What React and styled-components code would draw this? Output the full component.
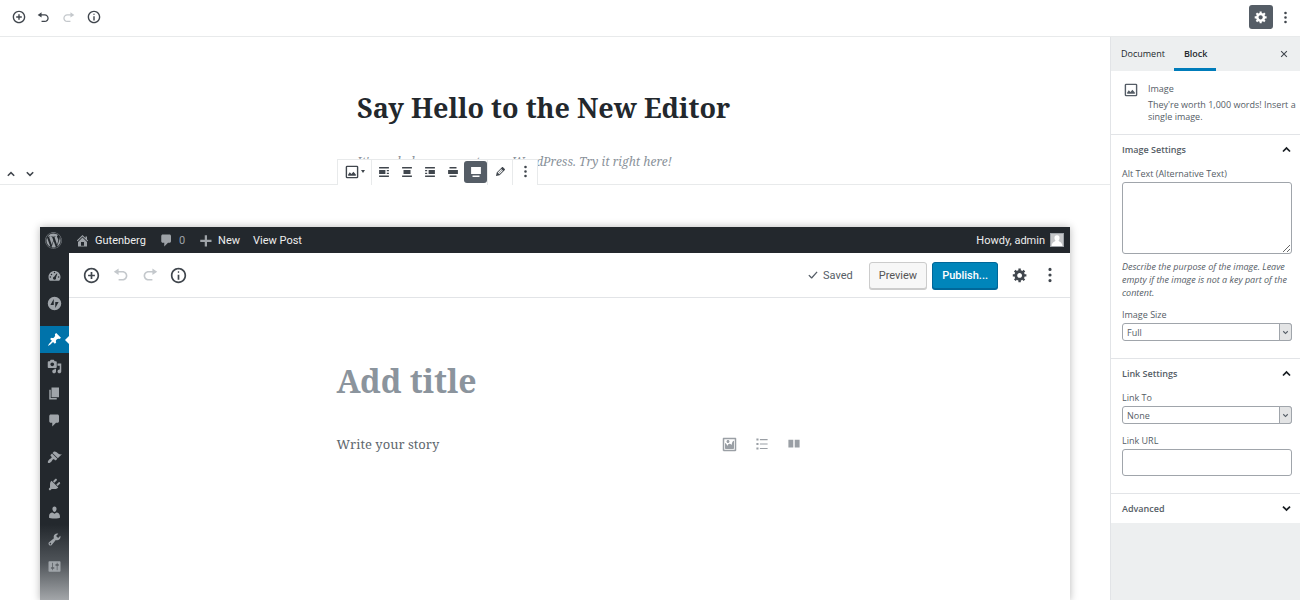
import React, { useState } from "react";
import styled, { createGlobalStyle, css } from "styled-components";
import { FaWordpress } from "react-icons/fa";

const GlobalStyle = createGlobalStyle`
  * {
    box-sizing: border-box;
  }
  body {
    margin: 0;
    background: #fff;
    color: #555d66;
    font-family: "Open Sans", "Noto Sans", sans-serif;
    font-size: 9px;
  }
  button, input, select, textarea {
    font: inherit;
    color: inherit;
    margin: 0;
  }
`;

const serif = `"Noto Serif", "DejaVu Serif Condensed", "DejaVu Serif", serif`;

const paths = {
  insert:
    "M10 1c-5 0-9 4-9 9s4 9 9 9 9-4 9-9-4-9-9-9zm0 16c-3.9 0-7-3.1-7-7s3.1-7 7-7 7 3.1 7 7-3.1 7-7 7zm1-11H9v3H6v2h3v3h2v-3h3V9h-3V6z",
  undo: "M12 5H7V2L1 6l6 4V7h5c2.2 0 4 1.8 4 4s-1.8 4-4 4H7v2h5c3.3 0 6-2.7 6-6s-2.7-6-6-6z",
  redo: "M8 5h5V2l6 4-6 4V7H8c-2.2 0-4 1.8-4 4s1.8 4 4 4h5v2H8c-3.3 0-6-2.7-6-6s2.7-6 6-6z",
  info: "M9 15h2V9H9v6zm1-10c-.5 0-1 .5-1 1s.5 1 1 1 1-.5 1-1-.5-1-1-1zm0-4c-5 0-9 4-9 9s4 9 9 9 9-4 9-9-4-9-9-9zm0 16c-3.9 0-7-3.1-7-7s3.1-7 7-7 7 3.1 7 7-3.1 7-7 7z",
  gear: "M18 12h-2.18c-.17.7-.44 1.35-.81 1.93l1.54 1.54-2.1 2.1-1.54-1.54c-.58.36-1.23.63-1.91.79V19H8v-2.18c-.68-.16-1.33-.43-1.91-.79l-1.54 1.54-2.12-2.12 1.54-1.54c-.36-.58-.63-1.23-.79-1.91H1V9.03h2.17c.16-.7.44-1.35.8-1.94L2.43 5.55l2.1-2.1 1.54 1.54c.58-.37 1.24-.64 1.93-.81V2h3v2.18c.68.16 1.33.43 1.91.79l1.54-1.54 2.12 2.12-1.54 1.54c.36.59.64 1.24.8 1.94H18V12zm-8.5 1.5c1.66 0 3-1.34 3-3s-1.34-3-3-3-3 1.34-3 3 1.34 3 3 3z",
  more: "M10 1a2 2 0 1 0 0 4 2 2 0 0 0 0-4zm0 7a2 2 0 1 0 0 4 2 2 0 0 0 0-4zm0 7a2 2 0 1 0 0 4 2 2 0 0 0 0-4z",
  close: "M5 3.5L10 8.5l5-5L16.500 5l-5 5 5 5-1.500 1.500-5-5-5 5L3.500 15l5-5-5-5z",
  up: "M10 5l7.500 7.500-2.200 2.200L10 9.400l-5.300 5.300-2.200-2.200z",
  down: "M10 15L2.500 7.500l2.200-2.200L10 10.600l5.300-5.300 2.200 2.200z",
  home: "M16 8.500l1.530 1.530-1.060 1.060L10 4.600l-6.470 6.490-1.060-1.060L10 2.500l4 4v-2h2v4zm-6-2.460l6 5.990V18H4v-5.970zM12 17v-5H8v5h4z",
  comment:
    "M5 2h9c1.100 0 2 .9 2 2v7c0 1.100-.9 2-2 2h-2l-5 5v-5H5c-1.100 0-2-.9-2-2V4c0-1.100.9-2 2-2z",
  plus: "M18 9v3h-6v6H9v-6H3V9h6V3h3v6h6z",
  dashboard:
    "M3.760 17h12.480c1.100-1.370 1.760-3.110 1.760-5 0-4.420-3.580-8-8-8s-8 3.580-8 8c0 1.890.66 3.630 1.760 5zM9 6a1 1 0 1 1 2 0 1 1 0 0 1-2 0zM5 8.500a1 1 0 1 1 2 0 1 1 0 0 1-2 0zM3.500 12a1 1 0 1 1 2 0 1 1 0 0 1-2 0zm11 0a1 1 0 1 1 2 0 1 1 0 0 1-2 0zM12.900 7.200l.9.5-1.900 5.200c.5 1.400-.4 2.700-1.900 2.700s-2.500-1.500-1.800-2.800c.3-.6.8-.9 1.400-1z",
  jetpack:
    "M10 1a9 9 0 1 0 0 18 9 9 0 0 0 0-18zM9 4v8H4.500zM11 16V8h4.500z",
  pin: "M10.440 3.020l1.820-1.820 6.360 6.350-1.830 1.820c-1.050-.68-2.480-.57-3.410.36l-.75.75c-.92.93-1.040 2.350-.35 3.410l-1.830 1.820-2.410-2.410-2.800 2.790c-.42.42-3.380 2.710-3.800 2.290s1.860-3.390 2.280-3.810l2.790-2.790L4.100 9.360l1.830-1.820c1.050.69 2.480.57 3.400-.36l.75-.75c.93-.92 1.050-2.350.36-3.410z",
  media:
    "M13 11V4c0-.55-.45-1-1-1h-1.670L9 1H5L3.670 3H2c-.55 0-1 .45-1 1v7c0 .55.45 1 1 1h10c.55 0 1-.45 1-1zM7 4.500c1.380 0 2.500 1.120 2.500 2.500S8.380 9.500 7 9.500 4.500 8.380 4.500 7 5.620 4.500 7 4.500zM14 6h5v10.500c0 1.380-1.120 2.500-2.500 2.500S14 17.880 14 16.500s1.120-2.500 2.500-2.500c.17 0 .34.02.5.05V9h-3V6zm-4 8.050V13h2v3.500c0 1.380-1.120 2.500-2.500 2.500S7 17.880 7 16.500 8.120 14 9.500 14c.17 0 .34.02.5.05z",
  page: "M6 15V2h10v13H6zm-1 1h8v2H3V5h2v11z",
  brush:
    "M14.480 11.060L7.410 3.990l1.500-1.500c.5-.56 2.300-.47 3.510.32 1.210.8 1.430 1.280 2.910 2.100 1.180.64 2.450 1.260 4.450.85zm-.71.71L6.700 4.700 4.930 6.470c-.39.39-.39 1.020 0 1.410l1.060 1.060c.39.39.39 1.030 0 1.420-.6.6-1.430 1.110-2.210 1.690-.35.26-.7.53-1.010.84C1.430 14.230.4 16.080 1.400 17.070c.99 1 2.840-.03 4.180-1.360.31-.31.58-.66.85-1.020.57-.78 1.080-1.610 1.690-2.210.39-.39 1.020-.39 1.410 0l1.060 1.060c.39.39 1.020.39 1.410 0z",
  plug: "M13.110 4.360L9.870 7.600 8 5.730l3.240-3.240c.35-.34 1.050-.2 1.560.32.52.51.66 1.210.31 1.550zm-8 1.770l.91-1.120 9.010 9.010-1.190.84c-.71.71-2.630 1.160-3.820 1.160H6.140L4.900 17.260c-.59.59-1.540.59-2.120 0-.59-.58-.59-1.530 0-2.120l1.240-1.240v-3.880c0-1.130.4-3.190 1.090-3.890zm7.260 3.970l3.240-3.240c.34-.35 1.040-.21 1.550.31.52.51.66 1.210.31 1.550l-3.240 3.250z",
  user: "M10 9.250c-2.270 0-2.730-3.440-2.730-3.440C7 4.020 7.820 2 9.970 2c2.160 0 2.980 2.020 2.710 3.810 0 0-.41 3.440-2.680 3.440zm0 2.570L12.720 10c2.390 0 4.520 2.330 4.520 4.530v2.490s-3.650 1.130-7.240 1.130c-3.650 0-7.240-1.130-7.240-1.130v-2.490c0-2.250 1.940-4.480 4.470-4.480z",
  wrench:
    "M16.680 9.770c-1.340 1.340-3.300 1.670-4.950.99l-5.410 6.520c-.99.99-2.590.99-3.580 0s-.99-2.590 0-3.570l6.520-5.420c-.68-1.650-.35-3.610.99-4.950 1.280-1.280 3.120-1.620 4.720-1.060l-2.890 2.890 2.820 2.820 2.860-2.870c.53 1.580.18 3.390-1.080 4.650zM3.810 16.210c.4.39 1.040.39 1.430 0 .4-.4.4-1.040 0-1.430-.39-.4-1.030-.4-1.430 0-.39.39-.39 1.030 0 1.430z",
  sliders:
    "M18 16V4c0-.55-.45-1-1-1H3c-.55 0-1 .45-1 1v12c0 .55.45 1 1 1h14c.55 0 1-.45 1-1zM8 11h1c.55 0 1 .45 1 1s-.45 1-1 1H8v1.500c0 .28-.22.5-.5.5s-.5-.22-.5-.5V13H6c-.55 0-1-.45-1-1s.45-1 1-1h1V5.500c0-.28.22-.5.5-.5s.5.22.5.5V11zm5-2h-1c-.55 0-1-.45-1-1s.45-1 1-1h1V5.500c0-.28.22-.5.5-.5s.5.22.5.5V7h1c.55 0 1 .45 1 1s-.45 1-1 1h-1v5.500c0 .28-.22.5-.5.5s-.5-.22-.5-.5V9z",
  check: "M16 4l1.600 1.300L8.500 16H7L2.300 11l1.600-1.500 3.800 3.700z",
  edit: "M13.890 3.390l2.710 2.720c.46.46.42 1.240.03 1.640l-8.010 8.020-5.560 1.160 1.160-5.580s7.600-7.630 7.990-8.030c.39-.39 1.220-.39 1.680.07zm-2.730 2.790l-5.590 5.610 1.110 1.110 5.540-5.650zm-2.970 8.230l5.580-5.600-1.070-1.080-5.590 5.600z",
  alignLeft: "M3 5h14V3H3v2zm9 8V7H3v6h9zm2-4h3V7h-3v2zm0 4h3v-2h-3v2zM3 17h14v-2H3v2z",
  alignCenter: "M3 5h14V3H3v2zm12 8V7H5v6h10zM3 17h14v-2H3v2z",
  alignRight: "M3 5h14V3H3v2zm0 4h3V7H3v2zm14 4V7H8v6h9zM3 13h3v-2H3v2zm0 4h14v-2H3v2z",
  alignWide: "M5 5h10V3H5v2zm12 8V7H3v6h14zM5 17h10v-2H5v2z",
  alignFull: "M17 13V3H3v10h14zM5 17h10v-2H5v2z",
  picture:
    "M3 1h14a2 2 0 0 1 2 2v14a2 2 0 0 1-2 2H3a2 2 0 0 1-2-2V3a2 2 0 0 1 2-2zm0 2v14h14V3zM4.500 15.500v-2l2.300-3 2.400 2.500 2.800-3.500 3.500 4v2z",
  formatImage:
    "M2.250 1h15.500c.69 0 1.250.56 1.250 1.250v15.500c0 .69-.56 1.250-1.250 1.250H2.250C1.560 19 1 18.440 1 17.750V2.250C1 1.560 1.560 1 2.250 1zM17 17V3H3v14h14zM10 6c0-1.100-.9-2-2-2s-2 .9-2 2 .9 2 2 2 2-.9 2-2zm3 5s0-6 3-6v10c0 .55-.45 1-1 1H5c-.55 0-1-.45-1-1V8c2 0 3 4 3 4s1-3 3-3 3 2 3 2z",
  list: "M2 2h3v3H2zM7 3h11v1.500H7zM2 8.500h3v3H2zM7 9.300h11v1.500H7zM2 15h3v3H2zM7 15.800h11v1.500H7z",
  columns: "M2 4h7v11H2zM11 4h7v11h-7z",
  avatar: "M10 2c3 0 4.500 2.200 4.200 5-.2 2-1 3.300-1.700 4 .2 2 6 2 6.500 9H1c.5-7 6.300-7 6.500-9-.7-.7-1.500-2-1.700-4C5.500 4.200 7 2 10 2z",
};

function Icon({ name, size = 15 }) {
  return (
    <svg width={size} height={size} viewBox="0 0 20 20" fill="currentColor" fillRule="evenodd" aria-hidden="true">
      <path d={paths[name]} />
    </svg>
  );
}

const Page = styled.div`
  display: flex;
  flex-direction: column;
  height: 100vh;
  overflow: hidden;
`;

const TopBar = styled.header`
  display: flex;
  align-items: center;
  justify-content: space-between;
  flex: none;
  height: 37px;
  padding: 0 6px 2px;
  border-bottom: 1px solid #e8eaeb;
`;

const Tools = styled.div`
  display: flex;
  align-items: center;
  gap: ${(props) => props.$gap || 0}px;
`;

const IconButton = styled.button`
  display: flex;
  align-items: center;
  justify-content: center;
  width: ${(props) => props.$width || 25}px;
  height: ${(props) => props.$height || 24}px;
  padding: 0;
  border: 0;
  border-radius: 3px;
  background: ${(props) => (props.$active ? "#555d66" : "transparent")};
  color: ${(props) => (props.$active ? "#fff" : "#40464d")};
  &:disabled {
    color: #c4c8cc;
  }
`;

const Body = styled.div`
  display: flex;
  flex: 1;
  min-height: 0;
`;

const Canvas = styled.main`
  flex: 1;
  min-width: 0;
  overflow: hidden;
`;

const Post = styled.div`
  width: 396px;
  margin: 0 auto;
  padding-top: 49px;
`;

const PostTitle = styled.h1`
  margin: 0;
  color: #23282d;
  font-family: ${serif};
  font-size: 27px;
  line-height: 44px;
  white-space: nowrap;
`;

const Tagline = styled.p`
  margin: 20px 0 0;
  color: #8a929a;
  font-family: ${serif};
  font-size: 12px;
  font-style: italic;
  line-height: 24px;
  white-space: nowrap;
`;

const ImageBlock = styled.section`
  position: relative;
  margin-top: 10px;
  padding: 42px 40px 0;
  border-top: 1px solid #e8eaeb;
`;

const Movers = styled.div`
  position: absolute;
  left: 1px;
  bottom: 100%;
  display: flex;
`;

const BlockToolbar = styled.div`
  position: absolute;
  left: 337px;
  bottom: 100%;
  display: flex;
  border: 1px solid #e8eaeb;
  border-bottom: 0;
  background: #fff;
`;

const ToolbarGroup = styled.div`
  display: flex;
  align-items: center;
  height: 25px;
  padding-bottom: 2px;
  & + & {
    border-left: 1px solid #e8eaeb;
  }
`;

const Caret = styled.span`
  margin-left: 2px;
  border: 2px solid transparent;
  border-top: 3px solid currentColor;
  border-bottom: 0;
`;

const Shot = styled.div`
  height: 374px;
  background: #fff;
  box-shadow: 0 0 8px rgba(0, 0, 0, 0.28);
  font-family: Roboto, Inter, sans-serif;
  font-size: 11px;
`;

const AdminBar = styled.div`
  display: flex;
  align-items: center;
  justify-content: space-between;
  height: 26px;
  padding: 0 6px 0 5px;
  background: #23282d;
  color: #eee;
`;

const AdminLink = styled.a`
  display: flex;
  align-items: center;
  gap: 5px;
  color: ${(props) => (props.$muted ? "#9ea3a8" : "#eee")};
  text-decoration: none;
  svg {
    color: #9ea3a8;
  }
`;

const Avatar = styled.span`
  display: flex;
  width: 14px;
  height: 14px;
  border: 1px solid #9ea3a8;
  background: #c5c7c9;
  svg {
    color: #fff;
  }
`;

const ShotBody = styled.div`
  display: flex;
  height: 348px;
`;

const AdminMenu = styled.nav`
  display: flex;
  flex-direction: column;
  flex: none;
  width: 29px;
  padding-top: 9px;
  overflow: hidden;
  background: linear-gradient(#23282d 78%, #50555a 89%, #a5a8ab);
`;

const MenuLink = styled.a`
  position: relative;
  display: flex;
  flex: none;
  align-items: center;
  justify-content: center;
  height: 27px;
  margin-top: ${(props) => props.$space || 0}px;
  color: #a0a5aa;
  ${(props) =>
    props.$current &&
    css`
      background: #0073aa;
      color: #fff;
      &::after {
        content: "";
        position: absolute;
        right: 0;
        border: 4px solid transparent;
        border-right-color: #fff;
        border-left: 0;
      }
    `}
`;

const ShotEditor = styled.div`
  flex: 1;
  min-width: 0;
`;

const ShotHeader = styled.div`
  display: flex;
  align-items: center;
  justify-content: space-between;
  height: 45px;
  padding: 0 12px 0 8px;
  border-bottom: 1px solid #e2e4e7;
`;

const Saved = styled.span`
  display: flex;
  align-items: center;
  gap: 4px;
  margin-right: 11px;
  color: #555d66;
`;

const TextButton = styled.button`
  height: 27px;
  padding: 0 9px;
  border: 1px solid ${(props) => (props.$primary ? "#006799" : "#ccc")};
  border-radius: 3px;
  background: ${(props) => (props.$primary ? "#0085ba" : "#f7f7f7")};
  box-shadow: 0 1px 0 ${(props) => (props.$primary ? "#006799" : "#ccc")};
  color: ${(props) => (props.$primary ? "#fff" : "#555")};
  font-weight: ${(props) => (props.$primary ? 500 : 400)};
`;

const ShotPost = styled.div`
  width: 466px;
  margin: 0 auto;
  padding-top: 60px;
  font-family: ${serif};
`;

const ShotTitle = styled.h2`
  margin: 0;
  color: #8b949d;
  font-size: 32px;
  line-height: 46px;
`;

const StoryRow = styled.div`
  display: flex;
  align-items: center;
  justify-content: space-between;
  margin-top: 28px;
  padding-right: 2px;
  color: #60676e;
  font-size: 13px;
  line-height: 24px;
`;

const Inserters = styled.div`
  display: flex;
  gap: 18px;
  color: #9a9fa5;
`;

const Sidebar = styled.aside`
  flex: none;
  width: 190px;
  border-left: 1px solid #e2e4e7;
  background: #edeff0;
`;

const Tabs = styled.div`
  display: flex;
  height: 34px;
  padding-right: 6px;
  align-items: stretch;
`;

const Tab = styled.button`
  padding: 2px 9px 0 10px;
  border: 0;
  border-bottom: 3px solid ${(props) => (props.$active ? "#007cba" : "transparent")};
  background: none;
  color: #23282d;
  font-weight: ${(props) => (props.$active ? 600 : 400)};
`;

const CloseSlot = styled.div`
  display: flex;
  align-items: center;
  margin-left: auto;
`;

const Card = styled.div`
  display: flex;
  gap: 10px;
  height: 63px;
  padding: 12px 4px 0 13px;
  background: #fff;
  line-height: 12px;
  svg {
    flex: none;
  }
`;

const CardTitle = styled.div`
  margin-bottom: 4px;
`;

const Panel = styled.section`
  padding: 0 8px 0 11px;
  border-top: 1px solid #e2e4e7;
  background: #fff;
`;

const PanelToggle = styled.button`
  display: flex;
  align-items: center;
  justify-content: space-between;
  width: 100%;
  height: 29px;
  padding: 0;
  border: 0;
  background: none;
  font-weight: 600;
  svg {
    color: #191e23;
  }
`;

const Fields = styled.div`
  padding: 3px 0 17px;
`;

const Label = styled.label`
  display: block;
  margin-top: ${(props) => props.$space || 0}px;
  margin-bottom: 1px;
  line-height: 14px;
`;

const field = css`
  display: block;
  width: 100%;
  border: 1px solid #a0a5ab;
  border-radius: 3px;
  background: #fff;
`;

const TextArea = styled.textarea`
  ${field}
  height: 72px;
`;

const TextInput = styled.input`
  ${field}
  height: 27px;
  padding: 0 5px;
`;

const SelectWrap = styled.div`
  position: relative;
`;

const Select = styled.select`
  ${field}
  appearance: none;
  height: 18px;
  padding: 0 18px 0 4px;
`;

const SelectArrow = styled.span`
  position: absolute;
  top: 0;
  right: 0;
  display: flex;
  align-items: center;
  justify-content: center;
  width: 13px;
  height: 18px;
  border: 1px solid #a0a5ab;
  border-radius: 0 3px 3px 0;
  background: #e3e4e5;
  pointer-events: none;
`;

const Help = styled.p`
  margin: 6px 0 0;
  font-style: italic;
  line-height: 13px;
`;

const alignments = [
  ["alignLeft", "Align left"],
  ["alignCenter", "Align center"],
  ["alignRight", "Align right"],
  ["alignWide", "Wide width"],
  ["alignFull", "Full width"],
];

const menu = [
  { icon: "dashboard", label: "Dashboard" },
  { icon: "jetpack", label: "Jetpack", space: 1 },
  { icon: "pin", label: "Posts", space: 9, current: true },
  { icon: "media", label: "Media" },
  { icon: "page", label: "Pages" },
  { icon: "comment", label: "Comments" },
  { icon: "brush", label: "Appearance", space: 10 },
  { icon: "plug", label: "Plugins" },
  { icon: "user", label: "Users", space: 1 },
  { icon: "wrench", label: "Tools" },
  { icon: "sliders", label: "Settings" },
  { icon: "up", label: "Collapse menu", space: 9 },
];

function SelectField({ id, label, options, space }) {
  return (
    <>
      <Label htmlFor={id} $space={space}>
        {label}
      </Label>
      <SelectWrap>
        <Select id={id}>
          {options.map((option) => (
            <option key={option}>{option}</option>
          ))}
        </Select>
        <SelectArrow>
          <Icon name="down" size={7} />
        </SelectArrow>
      </SelectWrap>
    </>
  );
}

function SettingsPanel({ title, initialOpen, children }) {
  const [open, setOpen] = useState(initialOpen);
  return (
    <Panel>
      <PanelToggle aria-expanded={open} onClick={() => setOpen(!open)}>
        {title}
        <Icon name={open ? "up" : "down"} size={11} />
      </PanelToggle>
      {open && <Fields>{children}</Fields>}
    </Panel>
  );
}

function EditorShot() {
  return (
    <Shot>
      <AdminBar>
        <Tools $gap={13}>
          <AdminLink href="#wp" aria-label="WordPress">
            <FaWordpress size={17} />
          </AdminLink>
          <AdminLink href="#site">
            <Icon name="home" />
            Gutenberg
          </AdminLink>
          <AdminLink href="#comments" $muted>
            <Icon name="comment" />0
          </AdminLink>
          <AdminLink href="#new">
            <Icon name="plus" />
            New
          </AdminLink>
          <AdminLink href="#view">View Post</AdminLink>
        </Tools>
        <AdminLink href="#profile">
          Howdy, admin
          <Avatar>
            <Icon name="avatar" size={12} />
          </Avatar>
        </AdminLink>
      </AdminBar>
      <ShotBody>
        <AdminMenu>
          {menu.map((item) => (
            <MenuLink
              key={item.label}
              href={`#${item.icon}`}
              aria-label={item.label}
              $space={item.space}
              $current={item.current}
            >
              <Icon name={item.icon} size={15} />
            </MenuLink>
          ))}
        </AdminMenu>
        <ShotEditor>
          <ShotHeader>
            <Tools>
              <IconButton $width={29} aria-label="Add block">
                <Icon name="insert" size={17} />
              </IconButton>
              <IconButton $width={29} aria-label="Undo" disabled>
                <Icon name="undo" size={16} />
              </IconButton>
              <IconButton $width={29} aria-label="Redo" disabled>
                <Icon name="redo" size={16} />
              </IconButton>
              <IconButton $width={29} aria-label="Information">
                <Icon name="info" size={17} />
              </IconButton>
            </Tools>
            <Tools $gap={5}>
              <Saved>
                <Icon name="check" size={12} />
                Saved
              </Saved>
              <TextButton>Preview</TextButton>
              <TextButton $primary>Publish...</TextButton>
              <IconButton $width={34} aria-label="Settings">
                <Icon name="gear" size={16} />
              </IconButton>
              <IconButton $width={16} aria-label="More options">
                <Icon name="more" size={16} />
              </IconButton>
            </Tools>
          </ShotHeader>
          <ShotPost>
            <ShotTitle>Add title</ShotTitle>
            <StoryRow>
              Write your story
              <Inserters>
                <Icon name="formatImage" size={15} />
                <Icon name="list" size={14} />
                <Icon name="columns" size={14} />
              </Inserters>
            </StoryRow>
          </ShotPost>
        </ShotEditor>
      </ShotBody>
    </Shot>
  );
}

function App() {
  const [align, setAlign] = useState("alignFull");
  const [tab, setTab] = useState("Block");

  return (
    <Page>
      <GlobalStyle />
      <TopBar>
        <Tools>
          <IconButton aria-label="Add block">
            <Icon name="insert" size={14} />
          </IconButton>
          <IconButton aria-label="Undo">
            <Icon name="undo" size={13} />
          </IconButton>
          <IconButton aria-label="Redo" disabled>
            <Icon name="redo" size={13} />
          </IconButton>
          <IconButton aria-label="Content structure">
            <Icon name="info" size={14} />
          </IconButton>
        </Tools>
        <Tools $gap={4}>
          <IconButton aria-label="Settings" $width={24} $active>
            <Icon name="gear" size={14} />
          </IconButton>
          <IconButton aria-label="More tools" $width={17}>
            <Icon name="more" size={13} />
          </IconButton>
        </Tools>
      </TopBar>
      <Body>
        <Canvas>
          <Post>
            <PostTitle>Say Hello to the New Editor</PostTitle>
            <Tagline>It's a whole new way to use WordPress. Try it right here!</Tagline>
          </Post>
          <ImageBlock>
            <Movers>
              <IconButton $width={19} $height={22} aria-label="Move up">
                <Icon name="up" size={10} />
              </IconButton>
              <IconButton $width={19} $height={22} aria-label="Move down">
                <Icon name="down" size={10} />
              </IconButton>
            </Movers>
            <BlockToolbar>
              <ToolbarGroup>
                <IconButton $width={33} aria-label="Change block type">
                  <Icon name="picture" size={14} />
                  <Caret />
                </IconButton>
              </ToolbarGroup>
              <ToolbarGroup>
                {alignments.map(([name, label]) => (
                  <IconButton
                    key={name}
                    $width={23}
                    $height={22}
                    $active={align === name}
                    aria-label={label}
                    onClick={() => setAlign(name)}
                  >
                    <Icon name={name} size={14} />
                  </IconButton>
                ))}
              </ToolbarGroup>
              <ToolbarGroup>
                <IconButton $width={24} aria-label="Edit image">
                  <Icon name="edit" size={13} />
                </IconButton>
              </ToolbarGroup>
              <ToolbarGroup>
                <IconButton $width={24} aria-label="More options">
                  <Icon name="more" size={13} />
                </IconButton>
              </ToolbarGroup>
            </BlockToolbar>
            <EditorShot />
          </ImageBlock>
        </Canvas>
        <Sidebar>
          <Tabs>
            {["Document", "Block"].map((name) => (
              <Tab key={name} $active={tab === name} onClick={() => setTab(name)}>
                {name}
              </Tab>
            ))}
            <CloseSlot>
              <IconButton $width={20} aria-label="Close settings">
                <Icon name="close" size={10} />
              </IconButton>
            </CloseSlot>
          </Tabs>
          <Card>
            <Icon name="picture" size={14} />
            <div>
              <CardTitle>Image</CardTitle>
              They're worth 1,000 words! Insert a single image.
            </div>
          </Card>
          <SettingsPanel title="Image Settings" initialOpen>
            <Label htmlFor="alt">Alt Text (Alternative Text)</Label>
            <TextArea id="alt" />
            <Help>
              Describe the purpose of the image. Leave empty if the image is not a key part of the
              content.
            </Help>
            <SelectField id="size" label="Image Size" options={["Full", "Large", "Medium"]} space={9} />
          </SettingsPanel>
          <SettingsPanel title="Link Settings" initialOpen>
            <SelectField id="linkTo" label="Link To" options={["None", "Media File"]} />
            <Label htmlFor="url" $space={10}>
              Link URL
            </Label>
            <TextInput id="url" type="text" />
          </SettingsPanel>
          <SettingsPanel title="Advanced" />
        </Sidebar>
      </Body>
    </Page>
  );
}

export default App;
